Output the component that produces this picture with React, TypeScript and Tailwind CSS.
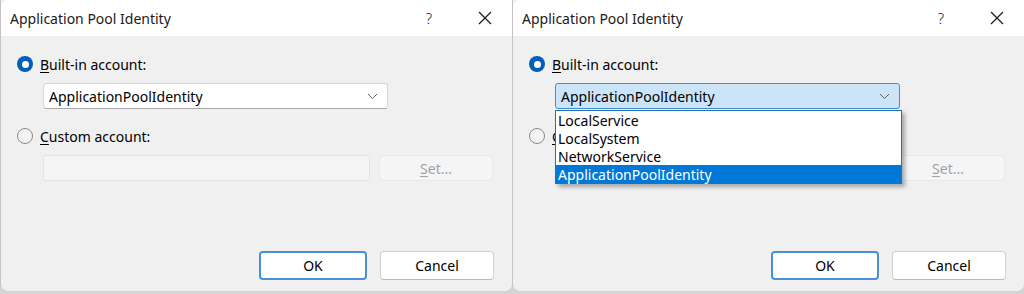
import React from "react";

const font = { fontFamily: '"Segoe UI", "Noto Sans", sans-serif' };

function CloseIcon() {
  return (
    <svg width="14" height="14" viewBox="0 0 14 14" className="block">
      <path d="M1 1 L13 13 M13 1 L1 13" stroke="#1a1a1a" strokeWidth="1.2" fill="none" />
    </svg>
  );
}

function Chevron() {
  return (
    <svg width="11" height="7" viewBox="0 0 11 7" className="block">
      <path d="M1 1 L5.5 5.5 L10 1" stroke="#5f5f5f" strokeWidth="1" fill="none" />
    </svg>
  );
}

function Radio({ checked }: { checked: boolean }) {
  if (checked) {
    return (
      <div className="w-[16px] h-[16px] rounded-full bg-[#005fb8] flex items-center justify-center shrink-0">
        <div className="w-[7px] h-[7px] rounded-full bg-white" />
      </div>
    );
  }
  return <div className="w-[16px] h-[16px] rounded-full border border-[#8a8a8a] bg-[#f3f3f3] shrink-0" />;
}

function Dialog({ open }: { open: boolean }) {
  return (
    <div className="relative w-[512px] h-[291px] bg-[#f0f0f0] rounded-b-[7px] border-l border-[#c4c4c4] overflow-visible">
      <div className="h-[36px] bg-white flex items-center pl-[9px] pr-[20px] rounded-tl-[7px]">
        <span className="text-[14px] text-[#1a1a1a] flex-1">Application Pool Identity</span>
        <span className="text-[15px] text-[#1a1a1a] mr-[46px] font-light">?</span>
        <CloseIcon />
      </div>
      <div className="flex flex-col pl-[16px] pr-[18px]">
        <div className="flex items-center h-[20px] mt-[18px] gap-[7px]">
          <Radio checked />
          <span className="text-[14px] text-black">
            <span className="underline underline-offset-2">B</span>uilt-in account:
          </span>
        </div>
        <div
          className={
            "ml-[26px] mt-[9px] w-[345px] h-[26px] rounded-[3px] flex items-center pl-[5px] pr-[9px] " +
            (open
              ? "bg-[#cce4f7] border border-[#3d8fd6]"
              : "bg-white border border-[#d6d6d6] border-b-[#a8a8a8]")
          }
        >
          <span className="text-[14px] text-black flex-1">ApplicationPoolIdentity</span>
          <Chevron />
        </div>
        <div className="flex items-center h-[20px] mt-[17px] gap-[7px]">
          <Radio checked={false} />
          <span className="text-[14px] text-black">
            <span className="underline underline-offset-2">C</span>ustom account:
          </span>
        </div>
        <div className="flex ml-[26px] mt-[9px] gap-[9px] h-[26px]">
          <div className="w-[327px] h-full bg-[#f5f5f5] border border-[#e3e3e3] rounded-[2px]" />
          <div className="w-[114px] h-full bg-[#f5f5f5] border border-[#e8e8e8] rounded-[4px] flex items-center justify-center">
            <span className="text-[14px] text-[#a2a2a2]">
              <span className="underline underline-offset-2">S</span>et...
            </span>
          </div>
        </div>
        <div className="flex justify-end gap-[13px] mt-[70px]">
          <div className="w-[108px] h-[29px] bg-white border-2 border-[#4a90d9] rounded-[4px] flex items-center justify-center">
            <span className="text-[14px] text-black">OK</span>
          </div>
          <div className="w-[114px] h-[29px] bg-white border border-[#d0d0d0] border-b-[#b8b8b8] rounded-[4px] flex items-center justify-center">
            <span className="text-[14px] text-black">Cancel</span>
          </div>
        </div>
      </div>
      {open && (
        <div className="absolute left-[42px] top-[110px] w-[347px] bg-white border border-[#2b6db3] shadow-[3px_3px_4px_rgba(0,0,0,0.3)] flex flex-col">
          {["LocalService", "LocalSystem", "NetworkService"].map((t) => (
            <div key={t} className="h-[18px] flex items-center pl-[2px] text-[14px] text-black">
              {t}
            </div>
          ))}
          <div className="h-[18px] flex items-center pl-[2px] text-[14px] text-white bg-[#0078d7]">
            ApplicationPoolIdentity
          </div>
        </div>
      )}
    </div>
  );
}

export default function App() {
  return (
    <div className="w-[1024px] h-[294px] bg-[#d4d4d4] flex overflow-hidden" style={font}>
      <Dialog open={false} />
      <Dialog open />
    </div>
  );
}
